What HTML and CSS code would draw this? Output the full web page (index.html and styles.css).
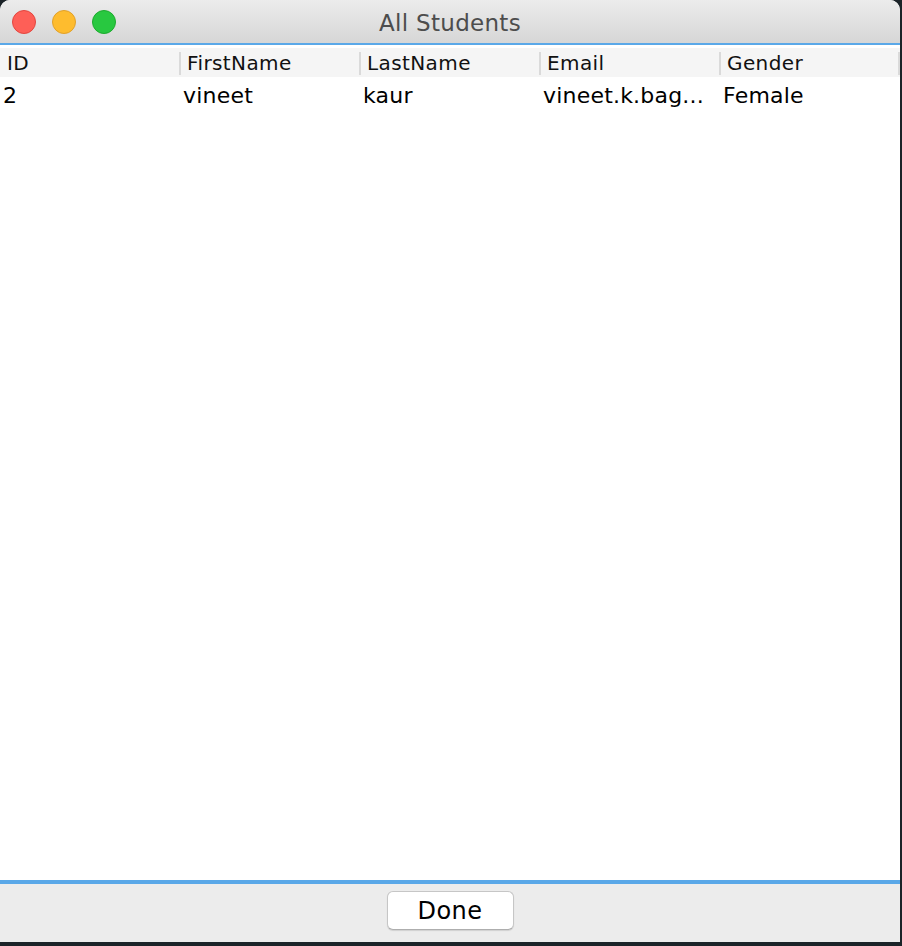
FILE: index.html
```html
<!DOCTYPE html>
<html>
<head>
<meta charset="utf-8">
<link rel="stylesheet" href="styles.css">
</head>
<body>
<div class="window">
  <div class="titlebar">
    <div class="lights">
      <span class="light red"></span>
      <span class="light yellow"></span>
      <span class="light green"></span>
    </div>
    <div class="title">All Students</div>
  </div>
  <div class="table">
    <div class="thead">
      <div class="th">ID</div>
      <div class="th">FirstName</div>
      <div class="th">LastName</div>
      <div class="th">Email</div>
      <div class="th">Gender</div>
    </div>
    <div class="tr">
      <div class="td">2</div>
      <div class="td">vineet</div>
      <div class="td">kaur</div>
      <div class="td">vineet.k.bag...</div>
      <div class="td">Female</div>
    </div>
  </div>
  <div class="footer">
    <button class="btn">Done</button>
  </div>
</div>
<div class="desktop"></div>
</body>
</html>
```

FILE: styles.css
```css
html, body {
  margin: 0;
  padding: 0;
  background: #1b2328;
  width: 902px;
  height: 946px;
  overflow: hidden;
  font-family: "DejaVu Sans", "Noto Sans", sans-serif;
}
.window {
  width: 900px;
  height: 942px;
  display: flex;
  flex-direction: column;
  background: #ffffff;
  border-top-right-radius: 10px;
  border-top-left-radius: 10px;
  overflow: hidden;
}
.titlebar {
  height: 43px;
  position: relative;
  background: linear-gradient(#ececec, #d6d6d6);
  border-bottom: 2px solid #5aa8e8;
  display: flex;
  align-items: center;
  justify-content: center;
  flex-shrink: 0;
}
.lights {
  position: absolute;
  left: 12px;
  top: 10px;
  display: flex;
  gap: 16px;
}
.light {
  width: 24px;
  height: 24px;
  border-radius: 50%;
  box-sizing: border-box;
}
.red { background: #fe5f57; border: 1px solid #e2463f; }
.yellow { background: #febc2e; border: 1px solid #e0a02a; }
.green { background: #28c840; border: 1px solid #1daa2e; }
.title {
  font-size: 23px;
  color: #4d4d4d;
  padding-top: 3px;
  letter-spacing: 0.3px;
}
.table {
  flex: 1;
  padding-top: 3px;
}
.thead {
  display: grid;
  grid-template-columns: repeat(5, 180px);
  height: 29px;
  background: #f5f5f5;
}
.th {
  font-size: 20px;
  color: #111;
  padding-left: 7px;
  line-height: 31px;
  position: relative;
  letter-spacing: 0.4px;
}
.th + .th::before {
  content: "";
  position: absolute;
  left: -1px;
  top: 4px;
  bottom: 4px;
  width: 2px;
  background: #dadada;
}
.th:last-child::after {
  content: "";
  position: absolute;
  right: 0;
  top: 4px;
  bottom: 4px;
  width: 2px;
  background: #dadada;
}
.tr {
  display: grid;
  grid-template-columns: repeat(5, 180px);
  height: 33px;
}
.td {
  font-size: 22px;
  color: #000;
  padding-left: 3px;
  line-height: 37px;
  white-space: nowrap;
  letter-spacing: 0.2px;
}
.footer {
  flex-shrink: 0;
  background: #ececec;
  border-top: 4px solid #5aa8e8;
  display: flex;
  justify-content: center;
  padding-top: 7px;
  box-sizing: border-box;
  height: 62px;
}
.btn {
  width: 127px;
  height: 39px;
  background: #ffffff;
  border: 1px solid #c6c6c6;
  border-bottom-color: #aeaeae;
  border-radius: 6px;
  box-shadow: 0 1px 1px rgba(0,0,0,0.12);
  font-family: "DejaVu Sans", sans-serif;
  font-size: 24px;
  letter-spacing: 0.5px;
  color: #000;
  padding: 0;
}
.desktop {
  height: 4px;
}
```
